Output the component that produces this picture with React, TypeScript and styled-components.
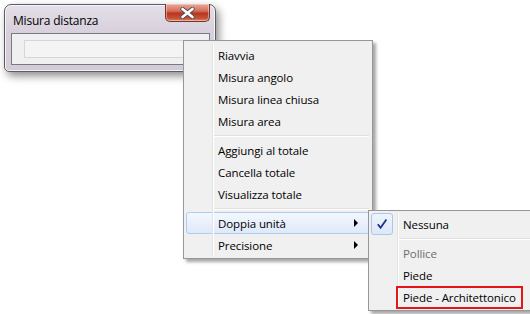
import styled, { createGlobalStyle } from 'styled-components';

const GlobalStyle = createGlobalStyle`
  html, body {
    margin: 0;
    padding: 0;
    background: #ffffff;
  }
  body {
    font-family: 'Open Sans', 'Noto Sans', sans-serif;
    font-size: 11.5px;
    letter-spacing: -0.1px;
    color: #000000;
  }
`;

const mainItems = [
  ['Riavvia', 'Misura angolo', 'Misura linea chiusa', 'Misura area'],
  ['Aggiungi al totale', 'Cancella totale', 'Visualizza totale'],
];

const subItems = [
  { label: 'Pollice', disabled: true },
  { label: 'Piede' },
  { label: 'Piede - Architettonico', marked: true },
];

function App() {
  return (
    <>
      <GlobalStyle />
      <Desktop>
        <Window>
          <TitleBar>
            <Title>Misura distanza</Title>
            <CloseButton>
              <svg width="15" height="12" viewBox="0 0 15 12">
                <path
                  d="M2.5 2 L12.5 10 M12.5 2 L2.5 10"
                  stroke="#4a4a5a"
                  strokeWidth="4.2"
                  strokeLinecap="round"
                />
                <path
                  d="M2.5 2 L12.5 10 M12.5 2 L2.5 10"
                  stroke="#ffffff"
                  strokeWidth="2.6"
                  strokeLinecap="round"
                />
              </svg>
            </CloseButton>
          </TitleBar>
          <ClientArea>
            <ResultBox />
          </ClientArea>
        </Window>

        <Menu $left={183} $top={40} $width={190} $padTop={3}>
          {mainItems.map((group, gi) => (
            <Group key={gi}>
              {gi > 0 && <Separator />}
              {group.map((label) => (
                <Item key={label}>
                  <Gutter />
                  <Label>{label}</Label>
                </Item>
              ))}
            </Group>
          ))}
          <Separator />
          <Item $active>
            <Gutter />
            <Label>Doppia unità</Label>
            <Arrow />
          </Item>
          <Item>
            <Gutter />
            <Label>Precisione</Label>
            <Arrow />
          </Item>
        </Menu>

        <Menu $left={368} $top={210} $width={180} $padTop={2}>
          <Item>
            <Gutter>
              <CheckBox>
                <svg width="12" height="12" viewBox="0 0 12 12">
                  <path
                    d="M1.8 6.2 L4.6 9.8 L10.4 1.6"
                    fill="none"
                    stroke="#1f2f8f"
                    strokeWidth="1.8"
                  />
                </svg>
              </CheckBox>
            </Gutter>
            <Label>Nessuna</Label>
          </Item>
          <Separator />
          {subItems.map((it) => (
            <Item key={it.label}>
              <Gutter />
              <Label $disabled={it.disabled}>
                {it.marked ? <Marked>{it.label}</Marked> : it.label}
              </Label>
            </Item>
          ))}
        </Menu>
      </Desktop>
    </>
  );
}

const Desktop = styled.div`
  position: relative;
  width: 530px;
  height: 314px;
  overflow: hidden;
  background: #ffffff;
`;

const Window = styled.div`
  position: absolute;
  left: 4px;
  top: 4px;
  width: 212px;
  height: 68px;
  box-sizing: border-box;
  border: 1px solid #5d5b63;
  border-radius: 7px 7px 5px 5px;
  background: linear-gradient(
    180deg,
    #e4dee8 0%,
    #d8d1dd 40%,
    #d3ccd8 100%
  );
  box-shadow: inset 0 0 0 1px rgba(255, 255, 255, 0.7),
    3px 4px 9px rgba(0, 0, 0, 0.45);
  display: flex;
  flex-direction: column;
  padding: 0 5px 6px 6px;
`;

const TitleBar = styled.div`
  height: 28px;
  display: flex;
  align-items: flex-start;
  justify-content: space-between;
`;

const Title = styled.span`
  margin: 7px 0 0 2px;
  font-size: 12px;
  letter-spacing: -0.2px;
  color: #000000;
`;

const CloseButton = styled.div`
  width: 45px;
  height: 18px;
  margin-top: -1px;
  box-sizing: border-box;
  border: 1px solid #6b3a35;
  border-top: none;
  border-radius: 0 0 5px 5px;
  background: linear-gradient(
    180deg,
    #e9a99c 0%,
    #d5705c 40%,
    #b8351f 55%,
    #c8533a 85%,
    #e08a6a 100%
  );
  box-shadow: inset 0 0 0 1px rgba(255, 220, 210, 0.5);
  display: flex;
  align-items: center;
  justify-content: center;
`;

const ClientArea = styled.div`
  flex: 1;
  box-sizing: border-box;
  border: 1px solid #7b7980;
  background: #f0f0f0;
  padding: 6px 0 0 12px;
`;

const ResultBox = styled.div`
  height: 18px;
  box-sizing: border-box;
  border: 1px solid #d6d6d6;
  border-right: none;
  background: #f4f4f4;
`;

const Menu = styled.div<{
  $left: number;
  $top: number;
  $width: number;
  $padTop: number;
}>`
  position: absolute;
  left: ${(p) => p.$left}px;
  top: ${(p) => p.$top}px;
  width: ${(p) => p.$width}px;
  box-sizing: border-box;
  border: 1px solid #979797;
  background: #f0f0f0;
  padding: ${(p) => p.$padTop}px 2px 2px 2px;
  box-shadow: 3px 3px 3px rgba(0, 0, 0, 0.35);
  display: flex;
  flex-direction: column;
`;

const Group = styled.div`
  display: flex;
  flex-direction: column;
`;

const Item = styled.div<{ $active?: boolean }>`
  position: relative;
  height: 22px;
  box-sizing: border-box;
  display: flex;
  align-items: center;
  border: 1px solid ${(p) => (p.$active ? '#aeccf1' : 'transparent')};
  border-radius: 3px;
  background: ${(p) =>
    p.$active
      ? 'linear-gradient(180deg, #f4f8fd 0%, #e9f0fb 50%, #dfe9f8 100%)'
      : 'transparent'};
`;

const Gutter = styled.div`
  width: 27px;
  height: 22px;
  flex: none;
  box-sizing: border-box;
  margin-left: -1px;
  border-right: 1px solid #e2e3e3;
  box-shadow: 1px 0 0 #ffffff;
  display: flex;
  align-items: center;
  justify-content: flex-start;
`;

const CheckBox = styled.div`
  width: 22px;
  height: 22px;
  box-sizing: border-box;
  border: 1px solid #a9c6ee;
  border-radius: 3px;
  background: linear-gradient(180deg, #eef4fc 0%, #dde8f7 100%);
  display: flex;
  align-items: center;
  justify-content: center;
`;

const Label = styled.span<{ $disabled?: boolean }>`
  margin-left: 5px;
  flex: 1;
  white-space: nowrap;
  color: ${(p) => (p.$disabled ? '#6d6d6d' : '#000000')};
`;

const Marked = styled.span`
  display: inline-block;
  margin-left: -7px;
  padding: 0 5px;
  border: 2px solid #e8141b;
  line-height: 19px;
`;

const Arrow = styled.span`
  width: 0;
  height: 0;
  margin-right: 11px;
  border-top: 4px solid transparent;
  border-bottom: 4px solid transparent;
  border-left: 4px solid #000000;
`;

const Separator = styled.div`
  height: 7px;
  margin-left: 28px;
  margin-right: 1px;
  position: relative;
  &::before {
    content: '';
    position: absolute;
    left: 0;
    right: 0;
    top: 3px;
    border-top: 1px solid #e0e0e0;
    border-bottom: 1px solid #ffffff;
  }
  &::after {
    content: '';
    position: absolute;
    left: -2px;
    top: 0;
    bottom: 0;
    border-left: 1px solid #e2e3e3;
    box-shadow: 1px 0 0 #ffffff;
  }
`;

export default App;
